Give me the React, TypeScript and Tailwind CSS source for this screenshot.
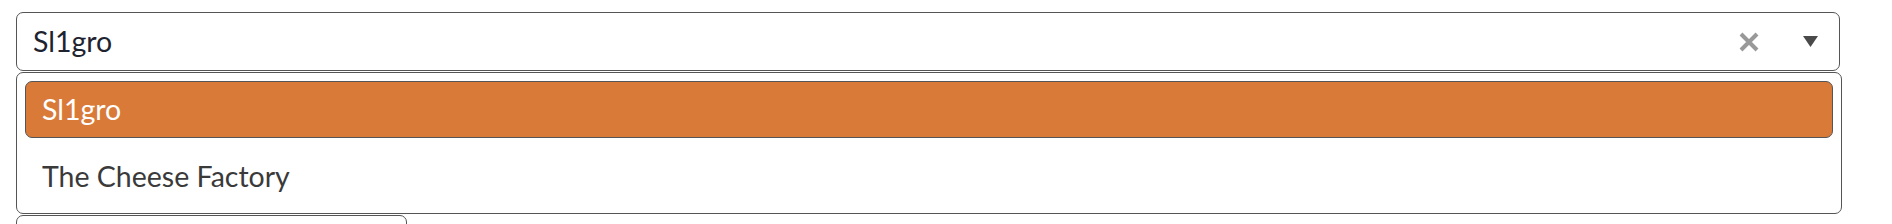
const options = ['Sl1gro', 'The Cheese Factory'];

export default function App() {
  const selected = 'Sl1gro';

  return (
    <div className="h-[224px] overflow-hidden bg-white px-4 pt-3 font-['Lato',_'Noto_Sans',_sans-serif]">
      {/* select control */}
      <div className="flex h-[59px] w-[1824px] items-center rounded-[7px] border border-[#555] bg-white pl-4 pr-[21px]">
        <span className="flex-1 text-[28.5px] leading-none text-[#1e2330]">{selected}</span>
        <button className="mr-[44px] flex items-center justify-center">
          <svg width="20" height="20" viewBox="0 0 20 20" className="stroke-[#999]" strokeWidth="4">
            <path d="M2 2 L18 18 M18 2 L2 18" />
          </svg>
        </button>
        <svg width="15" height="11" viewBox="0 0 15 11" className="fill-[#4a4a4a]">
          <path d="M0 0 L15 0 L7.5 11 Z" />
        </svg>
      </div>

      {/* menu */}
      <div className="mt-px flex w-[1826px] flex-col gap-[10px] rounded-[7px] border border-[#555] bg-white p-2">
        {options.map((o) => (
          <div
            key={o}
            className={`flex h-[57px] items-center rounded-[7px] border px-4 text-[28.5px] leading-none ${
              o === selected ? 'border-[#555] bg-[#d97a39] text-white' : 'border-transparent text-[#3a3a3a]'
            }`}
          >
            {o}
          </div>
        ))}
      </div>

      <div className="mt-px h-10 w-[391px] rounded-[7px] border border-[#555] bg-white" />
    </div>
  );
}
